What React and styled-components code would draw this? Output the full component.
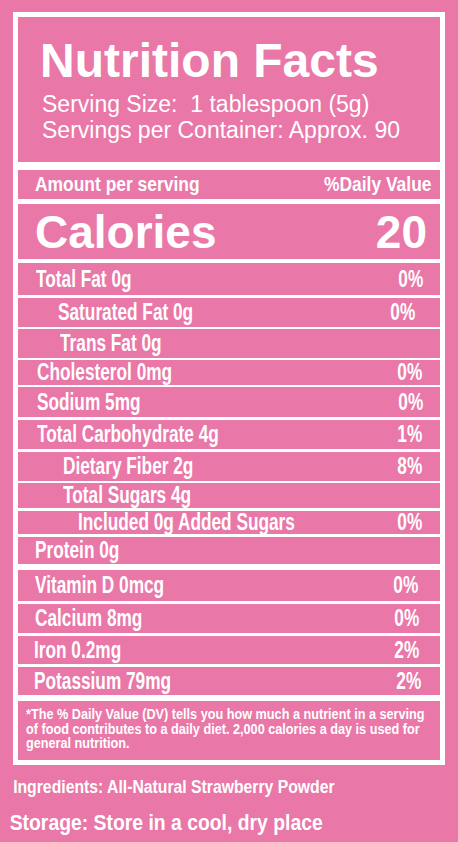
import React from 'react';
import styled, { createGlobalStyle } from 'styled-components';

const PINK = '#e977a8';

const GlobalStyle = createGlobalStyle`
    html, body {
        margin: 0;
        padding: 0;
        background: ${PINK};
    }
    body {
        width: 458px;
        height: 842px;
        overflow: hidden;
        color: #fff;
        font-family: "Liberation Sans", Arial, sans-serif;
    }
`;

const Page = styled.div`
    width: 458px;
    height: 842px;
    background: ${PINK};
    padding-top: 12px;
    box-sizing: border-box;
`;

const Frame = styled.div`
    width: 432px;
    margin-left: 13px;
    border: 5px solid #fff;
    box-sizing: border-box;
    background: ${PINK};
`;

const Header = styled.div`
    padding: 20px 0 19px 22px;
    border-bottom: 8px solid #fff;

    h1 {
        margin: 0 0 7px;
        font-size: 48px;
        line-height: 47px;
        font-weight: bold;
        white-space: nowrap;
    }
    p {
        margin: 0;
        padding-left: 2px;
        font-size: 23px;
        line-height: 26px;
        white-space: nowrap;
    }
`;

/* condensed look: the label font is squeezed horizontally */
const Row = styled.div`
    display: flex;
    justify-content: space-between;
    align-items: center;
    height: ${(p) => p.$h}px;
    border-top: ${(p) => p.$line || 0}px solid #fff;
    padding: 0 ${(p) => p.$right || 17}px 0 ${(p) => 17 + (p.$indent || 0)}px;
    font-weight: bold;
    font-size: ${(p) => p.$size || 23}px;
    line-height: 1;
    white-space: nowrap;

    span {
        display: inline-block;
        transform: scaleX(${(p) => p.$sx || 0.75});
        transform-origin: left center;
    }
    span + span {
        transform-origin: right center;
    }
`;

const Calories = styled(Row)`
    font-size: 46px;
    padding-right: 13px;

    span {
        transform: none;
    }
`;

const Footnote = styled.div`
    height: 65px;
    box-sizing: border-box;
    border-top: 6px solid #fff;
    padding: 6px 0 0 8px;
    font-size: 14.5px;
    font-weight: bold;
    line-height: 14.5px;

    div {
        white-space: nowrap;
        transform: scaleX(0.874);
        transform-origin: left center;
    }
`;

const Note = styled.div`
    font-size: ${(p) => p.$size}px;
    font-weight: bold;
    line-height: 1;
    padding-left: ${(p) => p.$left}px;
    margin-top: ${(p) => p.$top}px;
    white-space: nowrap;
    transform: scaleX(${(p) => p.$sx});
    transform-origin: left center;
`;

const nutrients = [
    { label: 'Total Fat 0g', dv: '0%', line: 4, h: 32, indent: 1 },
    { label: 'Saturated Fat 0g', dv: '0%', line: 3, h: 29, indent: 23, right: 25 },
    { label: 'Trans Fat 0g', line: 2, h: 29, indent: 25 },
    { label: 'Cholesterol 0mg', dv: '0%', line: 2, h: 25, indent: 2, right: 18 },
    { label: 'Sodium 5mg', dv: '0%', line: 2, h: 30, indent: 2 },
    { label: 'Total Carbohydrate 4g', dv: '1%', line: 3, h: 29, indent: 2, right: 18 },
    { label: 'Dietary Fiber 2g', dv: '8%', line: 3, h: 29, indent: 28, right: 18 },
    { label: 'Total Sugars 4g', line: 2, h: 25, indent: 28 },
    { label: 'Included 0g Added Sugars', dv: '0%', line: 3, h: 23, indent: 43, right: 18 },
    { label: 'Protein 0g', line: 3, h: 27 },
    { label: 'Vitamin D 0mcg', dv: '0%', line: 6, h: 31, right: 22 },
    { label: 'Calcium 8mg', dv: '0%', line: 3, h: 29, right: 21 },
    { label: 'Iron 0.2mg', dv: '2%', line: 3, h: 28, indent: -1, right: 21 },
    { label: 'Potassium 79mg', dv: '2%', line: 3, h: 28, indent: -1, right: 19 },
];

export default function App() {
    return (
        <Page>
            <GlobalStyle />
            <Frame>
                <Header>
                    <h1>Nutrition Facts</h1>
                    <p>Serving Size:&nbsp; 1 tablespoon (5g)</p>
                    <p>Servings per Container: Approx. 90</p>
                </Header>
                <Row $h={29} $right={9} $size={20.5} $sx={0.85}>
                    <span>Amount per serving</span>
                    <span>%Daily Value</span>
                </Row>
                <Calories $h={55} $line={5}>
                    <span>Calories</span>
                    <span>20</span>
                </Calories>
                {nutrients.map((n, i) => (
                    <Row key={i} $h={n.h} $line={n.line} $indent={n.indent} $right={n.right}>
                        <span>{n.label}</span>
                        <span>{n.dv}</span>
                    </Row>
                ))}
                <Footnote>
                    <div>*The % Daily Value (DV) tells you how much a nutrient in a serving</div>
                    <div>of food contributes to a daily diet. 2,000 calories a day is used for</div>
                    <div>general nutrition.</div>
                </Footnote>
            </Frame>
            <Note $size={18} $left={15} $top={13} $sx={0.875}>
                Ingredients: All-Natural Strawberry Powder
            </Note>
            <Note $size={22} $left={11} $top={16} $sx={0.88}>
                Storage: Store in a cool, dry place
            </Note>
        </Page>
    );
}
